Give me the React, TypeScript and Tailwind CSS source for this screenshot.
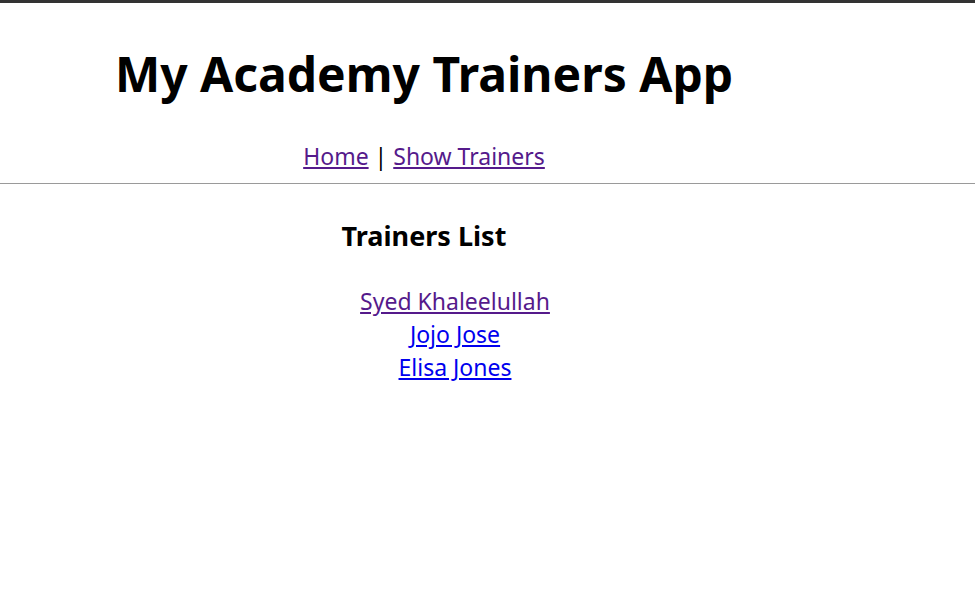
import React from "react";

export default function App() {
  const font = { fontFamily: '"Noto Sans", "Open Sans", sans-serif' };
  return (
    <div className="min-h-[594px] bg-white border-t-[3px] border-[#333333] text-black" style={font}>
      <div className="w-[848px] text-center">
        <h1 className="pt-[32px] text-[48px] leading-[78px] font-bold">My Academy Trainers App</h1>
        <nav className="mt-[28px] text-[23px] leading-[30px]">
          <a href="#" className="text-[#551a8b] underline">Home</a>
          <span> | </span>
          <a href="#" className="text-[#551a8b] underline">Show Trainers</a>
        </nav>
      </div>
      <hr className="mt-[12px] border-0 border-t border-[#9a9a9a]" />
      <div className="w-[848px] text-center">
        <h2 className="mt-[34px] text-[27px] leading-[36px] font-bold">Trainers List</h2>
        <ul className="mt-[31px] pl-[62px] text-[23px] leading-[33px]">
          <li><a href="#" className="text-[#551a8b] underline">Syed Khaleelullah</a></li>
          <li><a href="#" className="text-[#0000ee] underline">Jojo Jose</a></li>
          <li><a href="#" className="text-[#0000ee] underline">Elisa Jones</a></li>
        </ul>
      </div>
    </div>
  );
}
